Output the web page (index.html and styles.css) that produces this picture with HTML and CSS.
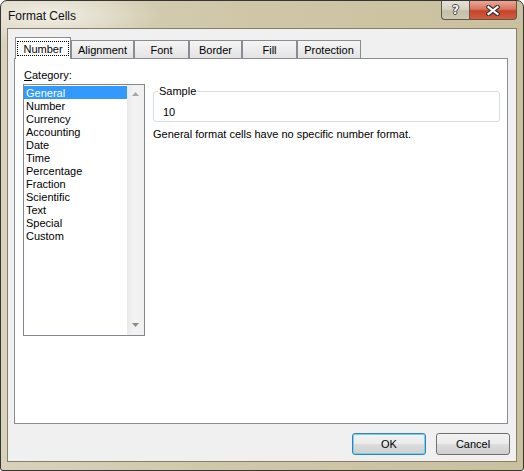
FILE: index.html
```html
<!DOCTYPE html>
<html>
<head>
<meta charset="utf-8">
<link rel="stylesheet" href="styles.css">
</head>
<body>
<div class="window">
  <div class="titlebar">
    <span class="title">Format Cells</span>
    <div class="caption-btns">
      <div class="cbtn help"><span class="help-glyph">?</span></div>
      <div class="cbtn close">
        <svg width="14" height="11" viewBox="0 0 14 11">
          <path d="M2.5 2 L11.5 9 M11.5 2 L2.5 9" stroke="#3a3030" stroke-width="4.4" stroke-linecap="square" fill="none"/>
          <path d="M2.5 2 L11.5 9 M11.5 2 L2.5 9" stroke="#ffffff" stroke-width="2.2" stroke-linecap="square" fill="none"/>
        </svg>
      </div>
    </div>
  </div>
  <div class="client">
    <div class="tabs">
      <div class="tab tab-number active"><span class="focus">Number</span></div>
      <div class="tab tab-alignment">Alignment</div>
      <div class="tab tab-font">Font</div>
      <div class="tab tab-border">Border</div>
      <div class="tab tab-fill">Fill</div>
      <div class="tab tab-protection">Protection</div>
    </div>
    <div class="panel">
      <div class="col-left">
        <div class="label"><u>C</u>ategory:</div>
        <div class="listbox">
          <ul class="items">
            <li class="selected">General</li>
            <li>Number</li>
            <li>Currency</li>
            <li>Accounting</li>
            <li>Date</li>
            <li>Time</li>
            <li>Percentage</li>
            <li>Fraction</li>
            <li>Scientific</li>
            <li>Text</li>
            <li>Special</li>
            <li>Custom</li>
          </ul>
          <div class="scrollbar">
            <div class="sb-btn">
              <svg width="7" height="4" viewBox="0 0 7 4"><path d="M3.5 0 L7 4 L0 4 Z" fill="#a6a6a6"/></svg>
            </div>
            <div class="sb-btn sb-down">
              <svg width="7" height="4" viewBox="0 0 7 4"><path d="M0 0 L7 0 L3.5 4 Z" fill="#8a8a8a"/></svg>
            </div>
          </div>
        </div>
      </div>
      <div class="col-right">
        <fieldset class="sample">
          <legend>Sample</legend>
          <div class="sample-value">10</div>
        </fieldset>
        <p class="desc">General format cells have no specific number format.</p>
      </div>
    </div>
    <div class="buttons">
      <button class="btn default">OK</button>
      <button class="btn">Cancel</button>
    </div>
  </div>
</div>
</body>
</html>
```

FILE: styles.css
```css
* { box-sizing: border-box; }
html, body { margin: 0; padding: 0; }
body {
  width: 524px;
  height: 471px;
  font-family: "Liberation Sans", Arial, sans-serif;
  font-size: 11px;
  color: #000;
  background: #ffffff;
}
.window {
  width: 524px;
  height: 471px;
  border: 1px solid #353535;
  border-radius: 7px 7px 3px 3px;
  background:
    radial-gradient(ellipse 110px 30px at 50px 14px, rgba(255,255,255,0.65), rgba(255,255,255,0) 100%),
    linear-gradient(to right, #d9d2bb 0%, #cfc7a8 45%, #c9c09e 100%);
  padding: 0 6px 8px 6px;
  display: flex;
  flex-direction: column;
}
.titlebar {
  height: 27px;
  display: flex;
  align-items: flex-start;
}
.title {
  font-size: 12px;
  line-height: 14px;
  margin: 8px 0 0 1px;
  color: #111;
}
.caption-btns {
  margin-left: auto;
  display: flex;
}
.cbtn {
  height: 19px;
  border: 1px solid #5f5848;
  border-top: none;
  display: flex;
  align-items: center;
  justify-content: center;
}
.help {
  width: 28px;
  border-right: none;
  border-radius: 0 0 0 4px;
  background: linear-gradient(#e4e1d6 0%, #d8d3c2 45%, #c6bfa8 55%, #cfc8b2 100%);
}
.help-glyph {
  font-family: "DejaVu Sans", sans-serif;
  font-weight: bold;
  font-size: 12px;
  line-height: 12px;
  color: #f4f4f4;
  text-shadow: 1px 0 0 #4a4a4a, -1px 0 0 #4a4a4a, 0 1px 0 #4a4a4a, 0 -1px 0 #4a4a4a;
}
.close {
  width: 48px;
  border-radius: 0 0 4px 0;
  background: linear-gradient(#eaa797 0%, #d97560 45%, #c4432b 55%, #d35c40 100%);
}
.client {
  flex: 1;
  background: #f0f0f0;
  border: 1px solid #857f6a;
  padding: 8px 8px 6px 6px;
  display: flex;
  flex-direction: column;
}
.tabs {
  display: flex;
  align-items: flex-end;
  height: 21px;
  margin-left: 1px;
}
.tab {
  height: 18px;
  border: 1px solid #898c95;
  border-bottom: none;
  background: linear-gradient(#f5f5f5, #e3e3e3);
  display: flex;
  justify-content: center;
  align-items: center;
  padding-top: 2px;
  line-height: 13px;
}
.tab-number { width: 56px; }
.tab-alignment { width: 63px; }
.tab-font { width: 55px; }
.tab-border { width: 53px; }
.tab-fill { width: 55px; }
.tab-protection { width: 64px; }
.tab.active {
  height: 22px;
  background: #ffffff;
  margin-bottom: -1px;
  position: relative;
  z-index: 1;
  align-items: flex-start;
  padding: 0;
}
.focus {
  display: block;
  width: 52px;
  height: 15px;
  margin-top: 3px;
  border: 1px dotted #000;
  text-align: center;
  line-height: 14px;
}
.panel {
  width: 494px;
  height: 366px;
  border: 1px solid #898c95;
  background: #ffffff;
  padding: 9px 7px 0 8px;
  display: flex;
  gap: 8px;
}
.col-left { width: 122px; }
.label {
  line-height: 13px;
  margin-bottom: 3px;
  padding-left: 1px;
  padding-top: 1px;
  height: 13px;
}
.listbox {
  width: 122px;
  height: 252px;
  border: 1px solid #828790;
  display: flex;
}
.items {
  flex: 1;
  list-style: none;
  margin: 0;
  padding: 1px 0 0 0;
}
.items li {
  height: 13px;
  line-height: 14px;
  padding-left: 2px;
}
.items li.selected {
  background: #3399ff;
  color: #ffffff;
}
.scrollbar {
  width: 17px;
  background: linear-gradient(to right, #eaeaea, #f3f3f3 40%, #f0f0f0);
  display: flex;
  flex-direction: column;
  justify-content: space-between;
  padding-bottom: 2px;
}
.sb-btn {
  height: 17px;
  display: flex;
  align-items: center;
  justify-content: center;
}
.sb-btn svg { display: block; }
.col-right {
  flex: 1;
  display: flex;
  flex-direction: column;
}
.sample {
  margin: 17px 0 0 0;
  border: 1px solid #d5dfe5;
  border-radius: 3px;
  padding: 7px 4px 3px 4px;
  min-width: 0;
}
.sample legend {
  padding: 0 1px;
  line-height: 13px;
}
.sample-value {
  line-height: 14px;
  height: 13px;
  padding-left: 5px;
}
.desc {
  margin: 6px 0 0 0;
  line-height: 13px;
}
.buttons {
  display: flex;
  justify-content: flex-end;
  gap: 10px;
  margin-top: 9px;
  margin-right: -2px;
}
.btn {
  width: 74px;
  height: 22px;
  border: 1px solid #707070;
  border-radius: 3px;
  background: linear-gradient(#f2f2f2 0%, #ebebeb 50%, #dddddd 50%, #cfcfcf 100%);
  font: inherit;
  color: #000;
  padding: 0;
}
.btn.default {
  border-color: #3c7fb1;
  box-shadow: inset 0 0 0 1px #6fd2f6;
}
```
